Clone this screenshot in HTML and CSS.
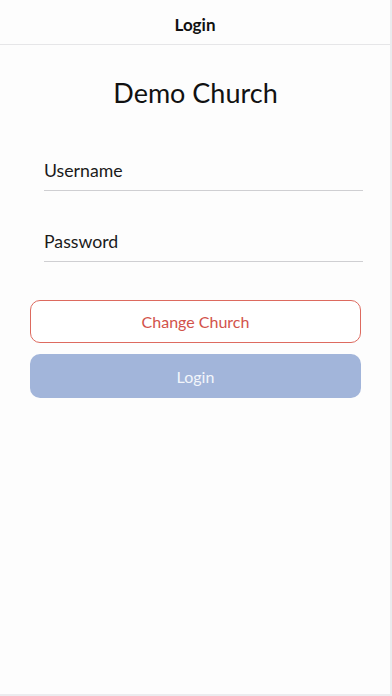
FILE: index.html
```html
<!DOCTYPE html>
<html lang="en">
<head>
    <meta charset="UTF-8">
    <meta name="viewport" content="width=device-width, initial-scale=1.0">
    <title>Login</title>
    <link rel="stylesheet" href="styles.css">
</head>
<body>

    <div class="app">
        <div class="navbar">
            <span class="nav-title">Login</span>
        </div>

        <div class="content">
            <h1 class="church-name">Demo Church</h1>

            <form class="login-form" onsubmit="return false;">
                <input type="text" class="field" placeholder="Username">
                <input type="password" class="field" placeholder="Password">

                <div class="buttons">
                    <button type="button" class="change-btn">Change Church</button>
                    <button type="submit" class="login-btn">Login</button>
                </div>
            </form>
        </div>
    </div>

</body>
</html>
```

FILE: styles.css
```css
body {
    font-family: Lato, "Open Sans", sans-serif;
    margin: 0;
    padding: 0;
    background-color: #ebebee;
}

.app {
    width: 390px;
    height: 694px;
    background-color: #fdfdfd;
}

.navbar {
    height: 44px;
    display: flex;
    justify-content: center;
    align-items: center;
    border-bottom: 1px solid #e6e6e8;
    background-color: #fdfdfd;
}

.nav-title {
    font-size: 17px;
    font-weight: bold;
    color: #111;
    margin-top: 4px;
}

.content {
    padding: 0 29px 0 30px;
}

.church-name {
    margin: 32px 0 0;
    text-align: center;
    font-size: 27px;
    font-weight: normal;
    color: #111;
    line-height: 32px;
}

.login-form {
    display: flex;
    flex-direction: column;
    margin-top: 35px;
}

.field {
    margin: 0 0 24px 14px;
    width: 319px;
    height: 47px;
    box-sizing: border-box;
    padding: 16px 0 10px;
    border: none;
    border-bottom: 1px solid #cfcfd2;
    background: transparent;
    font-family: Lato, sans-serif;
    font-size: 17.7px;
    line-height: 20px;
    outline: none;
}

.field::placeholder {
    color: #1a1a1a;
}

.buttons {
    display: flex;
    flex-direction: column;
    gap: 11px;
    margin-top: 14px;
}

.change-btn {
    height: 43px;
    border: 1px solid #dd6a5f;
    border-radius: 10px;
    background-color: #fff;
    color: #d2524a;
    font-family: Lato, sans-serif;
    font-size: 16px;
    cursor: pointer;
}

.login-btn {
    height: 44px;
    border: none;
    border-radius: 10px;
    background-color: #a2b5da;
    color: #f2f5fb;
    font-family: Lato, sans-serif;
    font-size: 16px;
    cursor: pointer;
}
```
